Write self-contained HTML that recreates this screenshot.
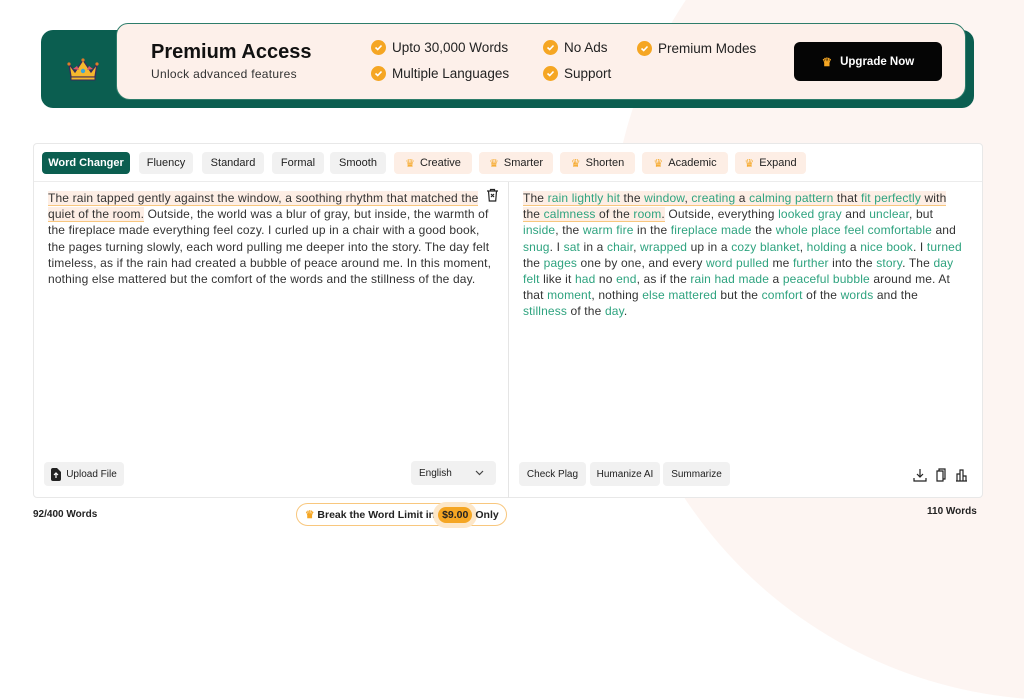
<!DOCTYPE html>
<html><head><meta charset="utf-8"><style>
*{box-sizing:border-box;margin:0;padding:0}
body{width:1024px;height:538px;overflow:hidden;background:#fff;font-family:"Liberation Sans",sans-serif;color:#222;position:relative}
.bgshape{position:absolute;left:610px;top:-200px;width:900px;height:900px;border-radius:50%;background:#fdf5f2}
.banner{position:absolute;left:41px;top:30px;width:933px;height:78px;background:#0b5e50;border-radius:12px}
.card{position:absolute;left:116px;top:23px;width:850px;height:77px;background:#fdf0ea;border:1.5px solid #2e7d6b;border-radius:12px 14px 14px 14px}
.crown{position:absolute;left:65px;top:56px}
.t1{position:absolute;left:151px;top:41px;font-size:20px;font-weight:bold;color:#111}
.t2{position:absolute;left:151px;top:67px;font-size:12px;color:#333;letter-spacing:.3px}
.f{position:absolute;font-size:13.5px;color:#222;display:flex;align-items:center;gap:6px}
.chk{width:15px;height:15px;border-radius:50%;background:#f5a623;display:inline-flex;align-items:center;justify-content:center}
.up{position:absolute;left:794px;top:42px;width:148px;height:39px;background:#050505;border-radius:6px;color:#fff;font-size:11.5px;font-weight:bold;display:flex;align-items:center;justify-content:center;gap:8px}
.ed{position:absolute;left:33px;top:143px;width:950px;height:355px;border:1px solid #e8e8e8;border-radius:4px;background:#fff}
.tb{position:absolute;left:0;top:0;width:948px;height:38px;border-bottom:1px solid #ececec}
.tab{position:absolute;top:8px;height:22px;border-radius:4px;background:#f1f1f1;font-size:11px;display:flex;align-items:center;justify-content:center;gap:5px;color:#222}
.tab.p{background:#fdeee5}
.tab.a{background:#0b5e50;color:#fff;font-weight:bold}
.div{position:absolute;left:474px;top:38px;width:1px;height:316px;background:#e5e5e5}
.txt{position:absolute;font-size:12px;letter-spacing:.15px;line-height:16.2px;color:#333;white-space:nowrap}
.hl{background:#fdeee5;border-bottom:1.5px solid #f8c77e}
.g{color:#2ea37f}
.btn{position:absolute;height:24px;background:#f1f1f1;border-radius:4px;font-size:10px;display:flex;align-items:center;justify-content:center;color:#222}
.foot{position:absolute;font-size:10px;font-weight:bold;color:#222}
.brk{position:absolute;left:296px;top:503px;width:211px;height:23px;border:1px solid #f8c77e;border-radius:12px;background:#fff;font-size:10.5px;display:flex;align-items:center;gap:3px;padding-left:8px;font-weight:bold}
.pr{background:#f5a623;border-radius:8px;padding:2px 4px;box-shadow:0 0 0 5px #fde7c8}
</style></head><body>
<div class="bgshape"></div>
<div class="banner"></div>
<div class="card"></div>
<svg class="crown" width="36" height="26" viewBox="0 0 36 26"><path d="M4 8 L10 16 L18 4 L26 16 L32 8 L30 21 L6 21Z" fill="#f5b82e" stroke="#3a2a5a" stroke-width="1.3"/><path d="M8 13 L12 10 L14 14Z M28 13 L24 10 L22 14Z" fill="#e0566d"/><circle cx="18" cy="15" r="2.2" fill="#3aa6d8"/><rect x="6" y="21" width="24" height="3" fill="#f5b82e" stroke="#3a2a5a" stroke-width="1"/><circle cx="4" cy="8" r="1.6" fill="#e07a2a"/><circle cx="32" cy="8" r="1.6" fill="#e07a2a"/><circle cx="18" cy="4" r="1.6" fill="#e07a2a"/></svg>
<div class="t1">Premium Access</div>
<div class="t2">Unlock advanced features</div>
<div class="f" style="left:371px;top:40px"><span class="chk"><svg width="9" height="9" viewBox="0 0 9 9"><path d="M1.5 4.5 L3.7 6.5 L7.5 2.5" stroke="#fff" stroke-width="1.6" fill="none"/></svg></span>Upto 30,000 Words</div>
<div class="f" style="left:371px;top:66px"><span class="chk"><svg width="9" height="9" viewBox="0 0 9 9"><path d="M1.5 4.5 L3.7 6.5 L7.5 2.5" stroke="#fff" stroke-width="1.6" fill="none"/></svg></span>Multiple Languages</div>
<div class="f" style="left:543px;top:40px"><span class="chk"><svg width="9" height="9" viewBox="0 0 9 9"><path d="M1.5 4.5 L3.7 6.5 L7.5 2.5" stroke="#fff" stroke-width="1.6" fill="none"/></svg></span>No Ads</div>
<div class="f" style="left:543px;top:66px"><span class="chk"><svg width="9" height="9" viewBox="0 0 9 9"><path d="M1.5 4.5 L3.7 6.5 L7.5 2.5" stroke="#fff" stroke-width="1.6" fill="none"/></svg></span>Support</div>
<div class="f" style="left:637px;top:41px"><span class="chk"><svg width="9" height="9" viewBox="0 0 9 9"><path d="M1.5 4.5 L3.7 6.5 L7.5 2.5" stroke="#fff" stroke-width="1.6" fill="none"/></svg></span>Premium Modes</div>
<div class="up"><span style="color:#f5a623">♛</span>Upgrade Now</div>

<div class="ed">
<div class="tb">
<div class="tab a" style="left:8px;width:88px">Word Changer</div>
<div class="tab" style="left:105px;width:54px">Fluency</div>
<div class="tab" style="left:168px;width:62px">Standard</div>
<div class="tab" style="left:238px;width:52px">Formal</div>
<div class="tab" style="left:296px;width:56px">Smooth</div>
<div class="tab p" style="left:360px;width:78px"><span style="color:#f5a623">♛</span>Creative</div>
<div class="tab p" style="left:445px;width:74px"><span style="color:#f5a623">♛</span>Smarter</div>
<div class="tab p" style="left:526px;width:75px"><span style="color:#f5a623">♛</span>Shorten</div>
<div class="tab p" style="left:608px;width:86px"><span style="color:#f5a623">♛</span>Academic</div>
<div class="tab p" style="left:701px;width:71px"><span style="color:#f5a623">♛</span>Expand</div>
</div>
<div class="div"></div>
<svg style="position:absolute;left:452px;top:44px" width="13" height="14" viewBox="0 0 13 14"><path d="M1 3h11M4.5 3V1.5h4V3M2.5 3l.8 10h6.4l.8-10M5 6l3 3M8 6l-3 3" stroke="#222" stroke-width="1.2" fill="none"/></svg>
<div class="txt" style="left:14px;top:46px"><span class="hl">The rain tapped gently against the window, a soothing rhythm that matched the</span><br><span class="hl">quiet of the room.</span> Outside, the world was a blur of gray, but inside, the warmth of<br>the fireplace made everything feel cozy. I curled up in a chair with a good book,<br>the pages turning slowly, each word pulling me deeper into the story. The day felt<br>timeless, as if the rain had created a bubble of peace around me. In this moment,<br>nothing else mattered but the comfort of the words and the stillness of the day.</div>
<div class="txt" style="left:489px;top:46px"><span class="hl">The <span class="g">rain lightly hit</span> the <span class="g">window</span>, <span class="g">creating</span> a <span class="g">calming pattern</span> that <span class="g">fit perfectly</span> with</span><br><span class="hl">the <span class="g">calmness</span> of the <span class="g">room</span>.</span> Outside, everything <span class="g">looked gray</span> and <span class="g">unclear</span>, but<br><span class="g">inside</span>, the <span class="g">warm fire</span> in the <span class="g">fireplace made</span> the <span class="g">whole place feel comfortable</span> and<br><span class="g">snug</span>. I <span class="g">sat</span> in a <span class="g">chair</span>, <span class="g">wrapped</span> up in a <span class="g">cozy blanket</span>, <span class="g">holding</span> a <span class="g">nice book</span>. I <span class="g">turned</span><br>the <span class="g">pages</span> one by one, and every <span class="g">word pulled</span> me <span class="g">further</span> into the <span class="g">story</span>. The <span class="g">day</span><br><span class="g">felt</span> like it <span class="g">had</span> no <span class="g">end</span>, as if the <span class="g">rain had made</span> a <span class="g">peaceful bubble</span> around me. At<br>that <span class="g">moment</span>, nothing <span class="g">else mattered</span> but the <span class="g">comfort</span> of the <span class="g">words</span> and the<br><span class="g">stillness</span> of the <span class="g">day</span>.</div>
<div class="btn" style="left:10px;top:318px;width:80px;gap:5px"><svg width="10" height="13" viewBox="0 0 10 13"><path d="M0 2a2 2 0 0 1 2-2h4l4 4v7a2 2 0 0 1-2 2H2a2 2 0 0 1-2-2z" fill="#222"/><path d="M5 5v5M3 7l2-2 2 2" stroke="#fff" stroke-width="1.2" fill="none"/></svg>Upload File</div>
<div class="btn" style="left:377px;top:317px;width:85px;justify-content:space-between;padding:0 12px 0 8px">English<svg width="9" height="6" viewBox="0 0 9 6"><path d="M1 1l3.5 3.5L8 1" stroke="#444" stroke-width="1.2" fill="none"/></svg></div>
<div class="btn" style="left:485px;top:318px;width:67px">Check Plag</div>
<div class="btn" style="left:556px;top:318px;width:70px">Humanize AI</div>
<div class="btn" style="left:629px;top:318px;width:67px">Summarize</div>
<svg style="position:absolute;left:879px;top:324px" width="60" height="14" viewBox="0 0 60 14"><path d="M7 1v8M4 6l3 3 3-3M1 10v3h12v-3" stroke="#222" stroke-width="1.2" fill="none"/><path d="M24 3h6v10h-6zM26 3V1h6v10h-2" stroke="#222" stroke-width="1.2" fill="none"/><path d="M44 13V6h3v7M47 13V2h3v11M50 13V8h3v5M43 13h11" stroke="#222" stroke-width="1.2" fill="none"/></svg>
</div>
<div class="foot" style="left:33px;top:509px">92/400 Words</div>
<div class="foot" style="left:927px;top:506px">110 Words</div>
<div class="brk"><span style="color:#f5a623">♛</span>Break the Word Limit in <span class="pr">$9.00</span> Only</div>
</body></html>
